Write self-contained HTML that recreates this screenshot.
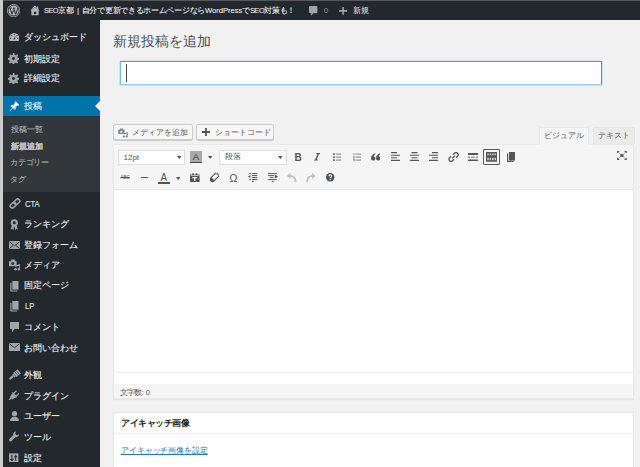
<!DOCTYPE html>
<html><head><meta charset="utf-8">
<style>
*{box-sizing:border-box;margin:0;padding:0}
html,body{width:640px;height:467px;overflow:hidden;background:#f1f1f1;font-family:"Liberation Sans",sans-serif;color:#444;position:relative}
.a{position:absolute;white-space:nowrap}
#frameL{left:0;top:0;width:3px;height:467px;background:#c9cbcc}
#bar{left:3px;top:0;width:637px;height:20px;background:#23282d;border-top:1px solid #55595d}
#side{left:3px;top:20px;width:97px;height:447px;background:#23282d}
.mi{left:24px;font-size:9px;color:#eef0f2;line-height:10px;-webkit-text-stroke:.12px #eef0f2}
.ic{left:9px;width:10px;height:10px}
.sub{left:10.5px;font-size:8px;color:#b4b9be;line-height:10px;-webkit-text-stroke:.1px #b4b9be}
.tb{font-size:8px;color:#eee;line-height:10px}
.ln{letter-spacing:-0.5px;font-size:7.4px}
.nar{display:inline-block;font-size:9.8px;transform:scaleX(.78);transform-origin:0 50%;color:#e4e6e8;margin-left:.8px;position:relative;top:-.4px}
.ti{width:12px;height:12px}
.ti svg{display:block}
</style></head><body>
<div class="a" id="frameL"></div>
<div class="a" id="bar"></div>
<div class="a" id="side"></div>

<!-- admin bar -->
<svg class="a" style="left:6.5px;top:3.7px" width="13.2" height="13.2" viewBox="0 0 20 20"><circle cx="10" cy="10" r="9.4" fill="none" stroke="#b4b8bc" stroke-width="1.2"/><circle cx="10" cy="10" r="7.6" fill="#b4b8bc"/><path d="M3.6 6.3h3.6M4.6 6.3l3.2 9.4 2.1-6.2M9.1 6.3h3.5M10 6.3l3.3 9.4 2.4-7.2c.5-1.4.2-2.1-.6-2.5" fill="none" stroke="#23282d" stroke-width="1.5"/></svg>
<svg class="a" style="left:29.5px;top:5px" width="10" height="10.5" viewBox="0 0 10 10.5"><path d="M4.9 0.6L0.3 5.8h1.1v4.4h7.2V5.8h1.1L8.3 4.3V1.4H7.1v1.6z" fill="#b8bcc2"/><path d="M2 5.3L4.9 2.1 7.8 5.3" fill="none" stroke="#5a5f64" stroke-width=".5"/><rect x="3.8" y="6.7" width="2.5" height="2.4" fill="#23282d"/></svg>
<div class="a tb" style="left:44px;top:6.2px;font-size:8px;letter-spacing:-0.3px;color:#f0f2f4;-webkit-text-stroke:.08px #f0f2f4"><span class="ln">SEO</span>京都<span style="margin:0 3px 0 3.5px">|</span>自分で更新できるホームページなら<span class="ln" style="letter-spacing:0;font-size:7.6px">WordPress</span>で<span class="ln">SEO</span>対策も！</div>
<svg class="a" style="left:309.3px;top:5.6px" width="8.4" height="10" viewBox="0 0 8.4 10"><path d="M1.2 0h6a1.2 1.2 0 0 1 1.2 1.2v4.8a1.2 1.2 0 0 1-1.2 1.2H4.2L2.2 10V7.2h-1A1.2 1.2 0 0 1 0 6V1.2A1.2 1.2 0 0 1 1.2 0z" fill="#a0a5aa"/></svg>
<div class="a tb" style="left:323.8px;top:6px;color:#8f959a">0</div>
<svg class="a" style="left:339.4px;top:6.8px" width="8.2" height="7.8" viewBox="0 0 8.2 7.8"><path d="M3.3 0h1.6v3.1h3.3v1.6H4.9v3.1H3.3V4.7H0V3.1h3.3z" fill="#a0a5aa"/></svg>
<div class="a tb" style="left:352.5px;top:6px">新規</div>

<!-- sidebar -->
<svg class="a" style="left:8.9px;top:32.8px" width="10.3" height="8.2" viewBox="0 0 10.3 8.2"><path d="M5.15 0A5.15 5.15 0 0 0 0 5.15c0 1.1.3 2.2.9 3.05h8.5c.6-.85.9-1.95.9-3.05A5.15 5.15 0 0 0 5.15 0z" fill="#b4b8bc"/><circle cx="5.15" cy="1.6" r=".6" fill="#23282d"/><circle cx="2.3" cy="2.7" r=".6" fill="#23282d"/><circle cx="8" cy="2.7" r=".6" fill="#23282d"/><circle cx="1.6" cy="5.3" r=".6" fill="#23282d"/><circle cx="8.7" cy="5.3" r=".6" fill="#23282d"/><path d="M4.4 6.4L6.3 2.8L5.9 6.6z" fill="#23282d"/></svg>
<div class="a mi" style="top:32px">ダッシュボード</div>
<svg class="a" style="left:7.9px;top:52.8px" width="11" height="11" viewBox="0 0 20 20"><path d="M8.5 0h3l.5 3 2 .9 2.5-1.8 2.1 2.1-1.8 2.5.9 2 3 .5v3l-3 .5-.9 2 1.8 2.5-2.1 2.1-2.5-1.8-2 .9-.5 3h-3l-.5-3-2-.9-2.5 1.8-2.1-2.1 1.8-2.5-.9-2-3-.5v-3l3-.5.9-2L2.4 4.6l2.1-2.1 2.5 1.8 2-.9z" fill="#a0a5aa"/><circle cx="10" cy="10" r="2.7" fill="#23282d"/></svg>
<div class="a mi" style="top:53.5px">初期設定</div>
<svg class="a" style="left:7.9px;top:73.4px" width="11" height="11" viewBox="0 0 20 20"><path d="M8.5 0h3l.5 3 2 .9 2.5-1.8 2.1 2.1-1.8 2.5.9 2 3 .5v3l-3 .5-.9 2 1.8 2.5-2.1 2.1-2.5-1.8-2 .9-.5 3h-3l-.5-3-2-.9-2.5 1.8-2.1-2.1 1.8-2.5-.9-2-3-.5v-3l3-.5.9-2L2.4 4.6l2.1-2.1 2.5 1.8 2-.9z" fill="#a0a5aa"/><circle cx="10" cy="10" r="2.7" fill="#23282d"/></svg>
<div class="a mi" style="top:73.2px">詳細設定</div>

<div class="a" style="left:3px;top:96px;width:97px;height:20px;background:#0073aa"></div>
<svg class="a" style="left:95px;top:100.5px" width="5" height="10" viewBox="0 0 5 10"><path d="M5 0L0 5l5 5z" fill="#f1f1f1"/></svg>
<svg class="a" style="left:8.6px;top:100.6px" width="10.6" height="10.4" viewBox="0 0 10.6 10.4"><path d="M6.6 0.3l3.8 3.8-1.2.6-.8-.3L6.5 6.3l.3 1.6-.9.9-1.9-1.9L1 10.1 0.5 9.9l2.9-3.1-1.9-1.9.9-.9 1.6.3 1.9-1.9-.3-.8z" fill="#fff"/></svg>
<div class="a mi" style="top:100.7px;color:#fff">投稿</div>
<div class="a" style="left:3px;top:116px;width:97px;height:76px;background:#32373c"></div>
<div class="a sub" style="top:125px">投稿一覧</div>
<div class="a sub" style="top:142.2px;color:#fff;font-weight:bold">新規追加</div>
<div class="a sub" style="top:158.2px;margin-left:-.8px;letter-spacing:-.1px">カテゴリー</div>
<div class="a sub" style="top:175.4px;margin-left:-.6px">タグ</div>

<!-- menu2 -->
<svg class="a" style="left:8.5px;top:198px" width="12" height="11" viewBox="0 0 12 11"><g transform="rotate(-42 6 5.5)" fill="none" stroke="#a0a5aa" stroke-width="1.6"><rect x="0.3" y="3.5" width="6.2" height="4" rx="2"/><rect x="5.5" y="3.5" width="6.2" height="4" rx="2"/></g></svg>
<div class="a mi" style="top:199px"><span class="nar">CTA</span></div>
<svg class="a" style="left:9.7px;top:218.7px" width="8.6" height="11.3" viewBox="0 0 8.6 11.3"><path d="M2 6.3L0.6 10.6l1.5-.8 1.2 1.5.9-4zM6.6 6.3l1.4 4.3-1.5-.8-1.2 1.5-.9-4z" fill="#a0a5aa"/><circle cx="4.3" cy="3.8" r="3.6" fill="#a0a5aa"/><circle cx="4.3" cy="3.8" r="1.5" fill="#23282d"/></svg>
<div class="a mi" style="top:219.3px">ランキング</div>
<svg class="a" style="left:9px;top:241px" width="11" height="8" viewBox="0 0 11 8"><rect x="0" y="0" width="11" height="8" fill="#a0a5aa"/><path d="M0.5 0.8l5 4 5-4M0.5 7.5l3.5-3M10.5 7.5l-3.5-3" fill="none" stroke="#23282d" stroke-width=".9"/></svg>
<div class="a mi" style="top:240px">登録フォーム</div>
<svg class="a" style="left:8.8px;top:258.5px" width="11.5" height="12" viewBox="0 0 11.5 12"><path d="M0 2.2h1.6L2.6 0.6h3L6.6 2.2h1v5H0z" fill="#a0a5aa"/><circle cx="3.8" cy="4.6" r="1.4" fill="#23282d"/><path d="M6.3 7.2L10.8 5.8V10.5" fill="none" stroke="#a0a5aa" stroke-width="1.3"/><circle cx="6.6" cy="10.3" r="1.3" fill="#a0a5aa"/><circle cx="9.9" cy="10.3" r="1.3" fill="#a0a5aa"/></svg>
<div class="a mi" style="top:260.1px">メディア</div>
<svg class="a" style="left:10px;top:281px" width="8.5" height="10.5" viewBox="0 0 8.5 10.5"><path d="M2.3 0h6.2v8.6H2.3z" fill="#a0a5aa"/><path d="M0.3 1.8h1.2v7.6h5.6v1.1H0.3z" fill="#a0a5aa"/></svg>
<div class="a mi" style="top:280.4px">固定ページ</div>
<svg class="a" style="left:10px;top:301.3px" width="8.5" height="10.5" viewBox="0 0 8.5 10.5"><path d="M2.3 0h6.2v8.6H2.3z" fill="#a0a5aa"/><path d="M0.3 1.8h1.2v7.6h5.6v1.1H0.3z" fill="#a0a5aa"/></svg>
<div class="a mi" style="top:301.2px"><span class="nar">LP</span></div>
<svg class="a" style="left:9.5px;top:322px" width="9" height="11" viewBox="0 0 9 11"><path d="M0 0h9v7H4.5L2 10.5V7H0z" fill="#a0a5aa"/></svg>
<div class="a mi" style="top:321.8px">コメント</div>
<svg class="a" style="left:9px;top:343px" width="11" height="8" viewBox="0 0 11 8"><rect x="0" y="0" width="11" height="8" fill="#a0a5aa"/><path d="M0.5 0.8l5 4 5-4" fill="none" stroke="#23282d" stroke-width=".9"/></svg>
<div class="a mi" style="top:342.5px">お問い合わせ</div>
<svg class="a" style="left:7.6px;top:368.8px" width="13" height="12" viewBox="0 0 13 12"><g transform="rotate(-38 6.5 6)" fill="#a0a5aa"><rect x="0" y="5.1" width="5.2" height="2" rx=".8"/><rect x="5" y="4.2" width="1.6" height="3.8"/><rect x="6.9" y="3.4" width="5.6" height="5.4"/></g><g transform="rotate(-38 6.5 6)" stroke="#23282d" stroke-width=".5"><path d="M8.8 3.4v5.4M10.6 3.4v5.4"/></g></svg>
<div class="a mi" style="top:369.7px">外観</div>
<svg class="a" style="left:8.2px;top:389.8px" width="12" height="11" viewBox="0 0 12 11"><g transform="rotate(-42 6 5.5)" fill="#a0a5aa"><rect x="-0.5" y="4.8" width="2.8" height="1.4"/><path d="M2 3.8L6.8 2.6V8.4L2 7.2z"/><rect x="6.6" y="2.2" width="1" height="6.6"/><rect x="7.4" y="3" width="3.6" height="1.3"/><rect x="7.4" y="6.7" width="3.6" height="1.3"/></g></svg>
<div class="a mi" style="top:390.8px">プラグイン</div>
<svg class="a" style="left:9.5px;top:410.9px" width="9" height="10.3" viewBox="0 0 9 10.3"><circle cx="4.5" cy="2.7" r="2.6" fill="#a0a5aa"/><path d="M0 10.3c0-2.9 1.4-4.6 4.5-4.6S9 7.4 9 10.3z" fill="#a0a5aa"/></svg>
<div class="a mi" style="top:411.2px">ユーザー</div>
<svg class="a" style="left:8.8px;top:431.4px" width="10.5" height="11" viewBox="0 0 11 11"><path d="M7.5 0.3a3 3 0 0 0-3 3.7L0.5 8a1.5 1.5 0 0 0 2.2 2.2l4-4a3 3 0 0 0 3.7-3l-1.8 1L7 3.5 6.6 1.9z" fill="#a0a5aa"/></svg>
<div class="a mi" style="top:432px">ツール</div>
<svg class="a" style="left:9.4px;top:452.8px" width="9.4" height="9.5" viewBox="0 0 9.6 9"><rect width="9.6" height="9" fill="#a0a5aa"/><path d="M3 1.5v6M1.5 6l1.5 1.5L4.5 6M6.8 1.5v6M5.3 3.5h3" stroke="#23282d" stroke-width="1"/></svg>
<div class="a mi" style="top:452.6px">設定</div>

<!-- content -->
<div class="a" style="left:112.8px;top:33px;font-size:14px;color:#4a4f54;line-height:16px">新規投稿を追加</div>
<div class="a" style="left:120px;top:61px;width:482px;height:24px;background:#fff;border:1px solid;border-color:#5e98cc #5a90c0 #9ccdf0 #80b8e4;box-shadow:0 0 1.5px rgba(30,140,190,.6)"></div>
<div class="a" style="left:126px;top:64px;width:1px;height:18px;background:#444"></div>


<!-- editor -->
<style>
.btn{position:absolute;top:123.5px;height:16.5px;background:#f7f7f7;border:1px solid #cccccc;border-radius:2px;box-shadow:0 1px 0 #ccc;font-size:8.2px;color:#555;line-height:15.5px;white-space:nowrap}
.ico{position:absolute;display:block}
.sel{position:absolute;top:150px;height:14.5px;background:#fff;border:1px solid #dddddd;font-size:8px;color:#555;line-height:12.5px;padding-left:5px;white-space:nowrap}
</style>
<div class="btn" style="left:113px;width:79.5px;padding-left:18px">メディアを追加</div>
<svg class="ico" style="left:118.4px;top:127.5px" width="10" height="10" viewBox="0 0 11.5 12"><path d="M0 2.2h1.6L2.6 0.6h3L6.6 2.2h1v5H0z" fill="#82878c"/><circle cx="3.8" cy="4.6" r="1.4" fill="#f7f7f7"/><path d="M6.3 7.2L10.8 5.8V10.5" fill="none" stroke="#82878c" stroke-width="1.3"/><circle cx="6.6" cy="10.3" r="1.3" fill="#82878c"/><circle cx="9.9" cy="10.3" r="1.3" fill="#82878c"/></svg>
<div class="btn" style="left:195.5px;width:78.5px;padding-left:18px">ショートコード</div>
<svg class="ico" style="left:201.5px;top:127.5px" width="8" height="8" viewBox="0 0 9 9"><path d="M3.5 0h2v3.5H9v2H5.5V9h-2V5.5H0v-2h3.5z" fill="#555"/></svg>

<div class="a" style="left:538.5px;top:127px;width:50.5px;height:17.5px;background:#f5f5f5;border:1px solid #e5e5e5;border-bottom:0;font-size:8.2px;color:#555;line-height:15px;text-align:center">ビジュアル</div>
<div class="a" style="left:592.5px;top:127px;width:42px;height:17px;background:#ebebeb;border:1px solid #e5e5e5;border-bottom:0;font-size:8.2px;color:#555;line-height:15px;text-align:center">テキスト</div>

<div class="a" style="left:113px;top:144px;width:521px;height:254.5px;background:#fff;border:1px solid #e8e8e8;box-shadow:0 1px 1px rgba(0,0,0,.05)"></div>
<div class="a" style="left:114px;top:145px;width:519px;height:44.5px;background:#f5f5f5;border-bottom:1px solid #e5e5e5"></div>
<div class="a" style="left:539.5px;top:143.5px;width:48.5px;height:2px;background:#f5f5f5"></div>
<div class="a" style="left:114px;top:372px;width:519px;height:1px;background:#eeeeee"></div>
<div class="a" style="left:114px;top:384px;width:519px;height:13.5px;background:#f5f5f5"></div>
<div class="a" style="left:120.3px;top:387.5px;font-size:8px;letter-spacing:-0.9px;color:#555;line-height:10px">文字数<span style="letter-spacing:0;font-size:7.4px">: 0</span></div>

<div class="sel" style="left:117.5px;width:67.5px;padding-top:1px">12pt</div>
<svg class="ico" style="left:176.5px;top:156px" width="4.5" height="3" viewBox="0 0 6 4"><path d="M0 0h6L3 4z" fill="#555"/></svg>
<div class="a" style="left:190px;top:151px;width:12px;height:12px;background:#a9a9a9"></div>
<div class="a" style="left:190px;top:151.5px;width:12px;text-align:center;font-size:9.5px;color:#3a3a3a;line-height:10px">A</div>
<div class="a" style="left:190px;top:161.5px;width:12px;height:1.5px;background:#444"></div>
<svg class="ico" style="left:207.8px;top:156px" width="4.5" height="3" viewBox="0 0 6 4"><path d="M0 0h6L3 4z" fill="#555"/></svg>
<div class="sel" style="left:218.5px;width:68px">段落</div>
<svg class="ico" style="left:278px;top:156px" width="4.5" height="3" viewBox="0 0 6 4"><path d="M0 0h6L3 4z" fill="#555"/></svg>

<div class="a" style="left:294.6px;top:152.8px;font-size:10px;font-weight:bold;color:#555;line-height:10px">B</div>
<svg class="ico" style="left:314.2px;top:153px" width="6.2" height="7.6" viewBox="0 0 6.2 7.6"><path d="M2.4 0h3.8L6 1.1H4.9L2.8 6.5h1.1L3.7 7.6H0L0.2 6.5h1.1L3.4 1.1H2.2z" fill="#555"/></svg>
<svg class="ico" style="left:333px;top:153px" width="8.5" height="8.5" viewBox="0 0 8.5 8.5"><path d="M0 0.3h1.8v1.6H0zM0 3.3h1.8v1.6H0zM0 6.3h1.8v1.6H0z" fill="#666"/><path d="M2.8 1.1h5.4M2.8 4.1h5.4M2.8 7.1h5.4" stroke="#777" stroke-width=".9"/></svg>
<svg class="ico" style="left:353px;top:153px" width="8" height="8.5" viewBox="0 0 8 8.5"><path d="M1 0.2v1.8M0.3 3.6h1.2L0.3 5h1.3M0.3 6.3h1.2L0.8 7.1h.7L0.3 8" stroke="#666" stroke-width=".7" fill="none"/><path d="M2.6 1.1h5.4M2.6 4.1h5.4M2.6 7.1h5.4" stroke="#777" stroke-width=".9"/></svg>
<svg class="ico" style="left:370.6px;top:153.2px" width="9.6" height="7.6" viewBox="0 0 9.6 7.6"><path d="M4.3 0.2C1.8 1 0 2.8 0 5.3A2.2 2.2 0 1 0 2.6 3.2C2.9 2.3 3.6 1.6 4.6 1.1z M9.3 0.2C6.8 1 5 2.8 5 5.3A2.2 2.2 0 1 0 7.6 3.2C7.9 2.3 8.6 1.6 9.6 1.1z" fill="#555"/></svg>
<svg class="ico" style="left:390.5px;top:152px" width="9" height="9" viewBox="0 0 9 9"><path d="M0 0.6h6M0 3.2h9M0 5.8h6M0 8.4h9" stroke="#555" stroke-width="1.1"/></svg>
<svg class="ico" style="left:409.7px;top:152px" width="9" height="9" viewBox="0 0 9 9"><path d="M1.5 0.6h6M0 3.2h9M1.5 5.8h6M0 8.4h9" stroke="#555" stroke-width="1.1"/></svg>
<svg class="ico" style="left:429px;top:152px" width="9" height="9" viewBox="0 0 9 9"><path d="M3 0.6h6M0 3.2h9M3 5.8h6M0 8.4h9" stroke="#555" stroke-width="1.1"/></svg>
<svg class="ico" style="left:447.5px;top:152px" width="11" height="10" viewBox="0 0 11 10"><path d="M5 2.8l1.5-1.5a2.1 2.1 0 0 1 3 3L8 5.8M6 7.2L4.5 8.7a2.1 2.1 0 0 1-3-3L3 4.2M4 6.2l3-2.4" fill="none" stroke="#555" stroke-width="1.3"/></svg>
<svg class="ico" style="left:467.5px;top:152.5px" width="10" height="8.5" viewBox="0 0 10 8.5"><path d="M0 0h10v2H0zM0 6.5h10v2H0z" fill="#555"/><path d="M0 4.2h2.2M3.3 4.2h3.4M7.8 4.2h2.2" stroke="#555" stroke-width=".9"/></svg>
<div class="a" style="left:483px;top:149px;width:16.8px;height:15.8px;border:1px solid #5a5a5a;border-radius:1px;background:#f7f7f7"></div>
<svg class="ico" style="left:486px;top:152px" width="11" height="9.8" viewBox="0 0 11 9.8"><rect width="11" height="9.8" fill="#555"/><path d="M1.2 1.6h1.6v1.6H1.2zM3.6 1.6h1.6v1.6H3.6zM6 1.6h1.6v1.6H6zM8.4 1.6h1.5v1.6H8.4zM1.2 5.8h1.6v2.4H1.2zM3.6 5.8h1.6v2.4H3.6zM6 5.8h1.6v2.4H6zM8.4 5.8h1.5v2.4H8.4z" fill="#c8c8c8"/></svg>
<svg class="ico" style="left:506.8px;top:152px" width="8.5" height="10" viewBox="0 0 8.5 10"><path d="M2 0h6.5v8.5H2z" fill="#555"/><path d="M0 1.5h1.2v7.3h5.5V10H0z" fill="#555"/></svg>
<svg class="ico" style="left:617.4px;top:150.9px" width="9.8" height="9" viewBox="0 0 9.8 9"><path d="M0 0h2.8L0 2.6zM9.8 0H7L9.8 2.6zM0 9h2.8L0 6.4zM9.8 9H7L9.8 6.4z" fill="#555"/><path d="M1.2 1.1l7.4 6.8M8.6 1.1L1.2 7.9" stroke="#666" stroke-width=".6"/><rect x="3.4" y="3.4" width="3" height="2.3" fill="#444"/></svg>

<!-- row 2 -->
<div class="a" style="left:120.5px;top:175px;font-size:4.5px;color:#555;line-height:5px;text-decoration:line-through">ABC</div>
<div class="a" style="left:141px;top:177px;width:7.3px;height:1.3px;background:#555"></div>
<div class="a" style="left:160.5px;top:171.5px;font-size:10px;color:#555;line-height:12px">A</div>
<div class="a" style="left:158px;top:182.3px;width:12px;height:1.3px;background:#555"></div>
<svg class="ico" style="left:175.5px;top:176.5px" width="4.5" height="3" viewBox="0 0 6 4"><path d="M0 0h6L3 4z" fill="#555"/></svg>
<svg class="ico" style="left:190.2px;top:172.8px" width="9.6" height="9" viewBox="0 0 9.6 9"><path d="M0 1.4h2.2V0.3h1.6v1.1h2V0.3h1.6v1.1h2.2V9H0z" fill="#555"/><rect x="0.8" y="2.2" width="8" height="0.8" fill="#ddd"/><path d="M2.3 4h5v1.3H5.5V8H4.1V5.3H2.3z" fill="#f5f5f5"/></svg>
<svg class="ico" style="left:210px;top:172.8px" width="8.6" height="9" viewBox="0 0 8.6 9"><g transform="rotate(-45 4.3 4.5)"><rect x="-0.6" y="2.3" width="9.8" height="4.4" rx="1.1" fill="#fafafa" stroke="#555" stroke-width="1.1"/><rect x="-0.6" y="2.3" width="3" height="4.4" rx="1" fill="#555"/></g></svg>
<div class="a" style="left:229.3px;top:172.8px;font-size:11px;color:#555;line-height:11px">Ω</div>
<svg class="ico" style="left:248.2px;top:172.8px" width="9.5" height="9.2" viewBox="0 0 9.5 9.2"><path d="M4 0.6h5.3M4 2.6h5.3M4 4.6h5.3M4 6.6h5.3M4 8.5h1.8M1.2 0.6h1.6M1.2 6.6h1.6" stroke="#555" stroke-width="1"/><path d="M0 3.6L2.4 1.9v3.4z" fill="#555"/></svg>
<svg class="ico" style="left:268px;top:172.8px" width="10.2" height="9.2" viewBox="0 0 10.2 9.2"><path d="M0 0.6h8.8M0 2.6h6M0 6.6h8.8M1.8 4.6h3.6M3.8 8.5h1.8" stroke="#555" stroke-width="1"/><path d="M10.2 3.6L6.8 1.6v4z" fill="#555"/></svg>
<svg class="ico" style="left:287.4px;top:172.8px" width="9.6" height="9.4" viewBox="0 0 9.6 9.4"><path d="M0 2.9L3.4 0v5.8z" fill="#bbb"/><path d="M2.8 2.9C6.2 2.9 8.6 4.8 8.6 9.4" fill="none" stroke="#bbb" stroke-width="1.6"/></svg>
<svg class="ico" style="left:306.2px;top:172.8px" width="9.6" height="9.4" viewBox="0 0 9.6 9.4"><path d="M9.6 2.9L6.2 0v5.8z" fill="#bbb"/><path d="M6.8 2.9C3.4 2.9 1 4.8 1 9.4" fill="none" stroke="#bbb" stroke-width="1.6"/></svg>
<svg class="ico" style="left:326.2px;top:173.2px" width="8.4" height="8.4" viewBox="0 0 9 9"><circle cx="4.5" cy="4.5" r="4.5" fill="#4a5258"/><path d="M3.1 3.4a1.4 1.4 0 1 1 2 1.3c-.5.3-.6.5-.6 1" fill="none" stroke="#f5f5f5" stroke-width="1.2"/><circle cx="4.5" cy="7" r=".7" fill="#f5f5f5"/></svg>

<!-- postbox -->
<div class="a" style="left:113px;top:411.5px;width:521px;height:60px;background:#fff;border:1px solid #e5e5e5;box-shadow:0 1px 1px rgba(0,0,0,.04)"></div>
<div class="a" style="left:114px;top:432.7px;width:519px;height:1px;background:#eeeeee"></div>
<div class="a" style="left:121px;top:417.5px;font-size:9px;letter-spacing:-0.5px;font-weight:bold;color:#23282d;line-height:10px">アイキャッチ画像</div>
<div class="a" style="left:121px;top:446.3px;font-size:8.1px;letter-spacing:-.12px;color:#1c7db3;line-height:10px;text-decoration:underline">アイキャッチ画像を設定</div>
</body></html>
